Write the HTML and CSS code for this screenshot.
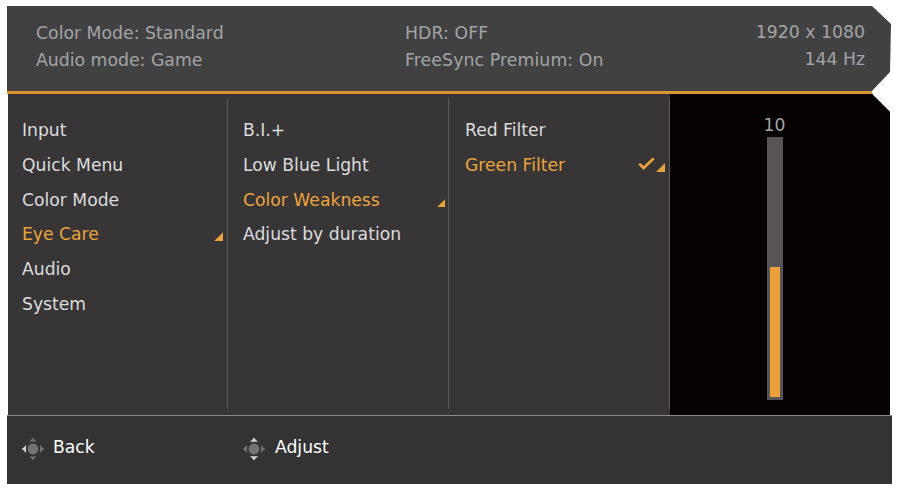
FILE: index.html
```html
<!DOCTYPE html>
<html lang="en">

<head>
    <meta charset="UTF-8" />
    <meta name="viewport" content="width=device-width, initial-scale=1.0" />
    <title>Monitor Menu</title>
    <link rel="stylesheet" href="styles.css">
</head>

<body>

    <div class="osd">
        <header class="status">
            <div class="status-mode">
                <div>Color Mode: Standard</div>
                <div>Audio mode: Game</div>
            </div>
            <div class="status-sync">
                <div>HDR: OFF</div>
                <div>FreeSync Premium: On</div>
            </div>
            <div class="status-screen">
                <div>1920 x 1080</div>
                <div>144 Hz</div>
            </div>
        </header>

        <main class="menu">
            <ul class="column">
                <li>Input</li>
                <li>Quick Menu</li>
                <li>Color Mode</li>
                <li class="active">Eye Care <span class="corner"></span></li>
                <li>Audio</li>
                <li>System</li>
            </ul>
            <ul class="column">
                <li>B.I.+</li>
                <li>Low Blue Light</li>
                <li class="active">Color Weakness <span class="corner small"></span></li>
                <li>Adjust by duration</li>
            </ul>
            <ul class="column filters">
                <li>Red Filter</li>
                <li class="active">Green Filter
                    <svg class="check" width="17" height="14" viewBox="0 0 17 14">
                        <path d="M1.2 6.6L5.6 11L15.6 1.4" fill="none" stroke="#eca43c" stroke-width="2.7" />
                    </svg>
                    <span class="corner"></span>
                </li>
            </ul>
            <div class="level">
                <div class="level-value">10</div>
                <div class="track">
                    <div class="fill" style="height: 50.5%;"></div>
                </div>
            </div>
        </main>

        <footer class="keys">
            <div class="key">
                <svg class="pad" width="24" height="24" viewBox="0 0 24 24">
                    <circle cx="12" cy="12" r="5.4" />
                    <path d="M8 4.6Q11 3 12 .6Q13 3 16 4.6Z" />
                    <path d="M8 19.4Q11 21 12 23.4Q13 21 16 19.4Z" />
                    <path class="lit" d="M5 7.8Q3.6 10.6 .6 12Q3.6 13.4 5 16.2Z" />
                    <path d="M19 7.8Q20.4 10.6 23.4 12Q20.4 13.4 19 16.2Z" />
                </svg>
                <span>Back</span>
            </div>
            <div class="key adjust">
                <svg class="pad" width="24" height="24" viewBox="0 0 24 24">
                    <circle cx="12" cy="12" r="5.4" />
                    <path class="lit" d="M7.8 4.8Q10.6 3 12 .6Q13.4 3 16.2 4.8Z" />
                    <path class="lit" d="M7.8 19.2Q10.6 21 12 23.4Q13.4 21 16.2 19.2Z" />
                    <path d="M5 7.8Q3.6 10.6 .6 12Q3.6 13.4 5 16.2Z" />
                    <path d="M19 7.8Q20.4 10.6 23.4 12Q20.4 13.4 19 16.2Z" />
                </svg>
                <span>Adjust</span>
            </div>
        </footer>
    </div>

</body>

</html>
```
FILE: styles.css
```css
* {
    box-sizing: border-box;
}

body {
    margin: 0;
    background-color: #fff;
    font-family: Verdana, "DejaVu Sans", sans-serif;
    font-size: 17.2px;
}

.osd {
    width: 886px;
    margin: 6px 0 0 7px;
}

.status {
    display: flex;
    width: 884px;
    height: 88px;
    padding: 14px 26px 0 29px;
    font-size: 17.3px;
    line-height: 27px;
    color: #a3a4a7;
    background-color: #414141;
    border-bottom: 3px solid #dc9535;
    clip-path: polygon(0 0, 865px 0, 884px 18px, 883px 66px, 864px 86px, 866px 88px, 0 88px);
}

.status-mode {
    width: 369px;
}

.status-sync {
    letter-spacing: 0.1px;
}

.status-screen {
    margin: -1px 0 0 auto;
    text-align: right;
}

.menu {
    display: flex;
    width: 882px;
    height: 321px;
    margin-left: 1px;
    background-color: #373535;
    clip-path: polygon(0 0, 864px 0, 882px 18px, 882px 321px, 0 321px);
}

.column {
    width: 221px;
    height: 311px;
    margin: 4px 0 0;
    padding: 15px 3px 0 15px;
    list-style: none;
    color: #dcdddf;
    border-right: 1px solid #5c5a5c;
}

.column:first-child {
    width: 220px;
    padding: 15px 4px 0 14px;
}

.filters {
    padding: 15px 4px 0 16px;
}

.column li {
    display: flex;
    align-items: center;
    height: 34.67px;
    white-space: nowrap;
}

.column .active {
    color: #eca43c;
}

.corner {
    width: 9px;
    height: 9px;
    margin: 5px 0 0 auto;
    background-color: #eca43c;
    clip-path: polygon(100% 0, 100% 100%, 0 100%);
}

.small {
    width: 8px;
    height: 8px;
    margin-top: 7px;
}

.check {
    margin: -2px 0 0 auto;
}

.check + .corner {
    margin-left: 1px;
}

.level {
    flex: 1;
    padding: 20px 11px 0 0;
    background-color: #060000;
}

.level-value {
    height: 23px;
    line-height: 23px;
    text-align: center;
    color: #a3a4a7;
}

.track {
    display: flex;
    align-items: flex-end;
    width: 16px;
    height: 263px;
    margin: 0 auto;
    padding: 3px;
    background-color: #565457;
}

.fill {
    width: 100%;
    background-color: #eba13a;
}

.keys {
    display: flex;
    width: 885px;
    height: 69px;
    padding: 0 0 6px 14px;
    color: #fff;
    background-color: #333;
    border-top: 1px solid #8b8989;
}

.key {
    display: flex;
    align-items: center;
    width: 221px;
}

.pad {
    margin: 3px 8px 0 0;
    fill: #727272;
}

.adjust .pad {
    margin-right: 9px;
}

.pad .lit {
    fill: #d5d5d5;
}
```
